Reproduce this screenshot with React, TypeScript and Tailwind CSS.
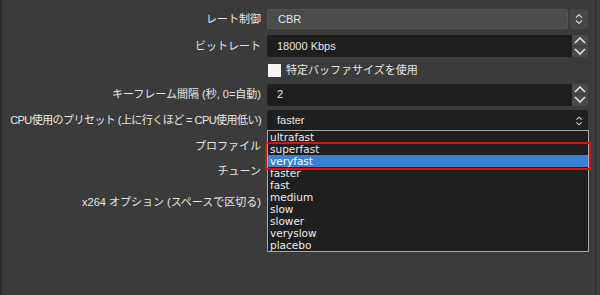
import React from "react";

const font = { fontFamily: '"Liberation Sans", "Noto Sans CJK JP", sans-serif' };
const listFont = { fontFamily: '"DejaVu Sans", "Liberation Sans", sans-serif' };

const presets = [
  "ultrafast",
  "superfast",
  "veryfast",
  "faster",
  "fast",
  "medium",
  "slow",
  "slower",
  "veryslow",
  "placebo",
];

function UpDown({ small }: { small?: boolean }) {
  // double chevron used by the combo boxes
  return (
    <svg width="10" height={small ? 12 : 14} viewBox="0 0 10 14" fill="none" stroke="#d0d0d0" strokeWidth="1.2">
      <path d="M2 5.5 L5 2.5 L8 5.5" />
      <path d="M2 8.5 L5 11.5 L8 8.5" />
    </svg>
  );
}

function Chevron({ up }: { up?: boolean }) {
  return (
    <svg width="14" height="8" viewBox="0 0 14 8" fill="none" stroke="#e0e0e0" strokeWidth="1.6">
      {up ? <path d="M2 7 L7 2 L12 7" /> : <path d="M2 1 L7 6 L12 1" />}
    </svg>
  );
}

function Label({ children, tight }: { children: React.ReactNode; tight?: boolean }) {
  return (
    <div
      className={
        tight
          ? "w-[265px] shrink-0 pr-[6px] text-right text-[11px] tracking-[-0.55px] text-[#e6e6e6] whitespace-nowrap"
          : "w-[265px] shrink-0 pr-[6px] text-right text-[11px] text-[#e6e6e6] whitespace-nowrap"
      }
    >
      {children}
    </div>
  );
}

function SpinBox({ value }: { value: string }) {
  return (
    <div className="flex h-[22px] w-[321px] items-stretch">
      <div className="flex flex-1 items-center rounded-l-[3px] bg-[#1e1e1e] pl-[10px] text-[11px] text-[#e6e6e6]">
        {value}
      </div>
      <div className="flex w-[16px] flex-col">
        <div className="flex flex-1 items-center justify-center rounded-tr-[3px] bg-[#4a4a4a]">
          <Chevron up />
        </div>
        <div className="flex flex-1 items-center justify-center rounded-br-[3px] bg-[#4a4a4a] border-t border-[#3a3a3a]">
          <Chevron />
        </div>
      </div>
    </div>
  );
}

export default function App() {
  return (
    <div
      className="relative h-[295px] w-[600px] overflow-hidden bg-[#3b3b3b] border-l-[2px] border-l-[#2d2d2d]"
      style={font}
    >
      <div className="absolute right-[4px] top-0 h-full w-[1px] bg-[#2e2e2e]" />
      <div className="flex flex-col pt-[9px]">
        {/* レート制御 */}
        <div className="flex h-[20px] items-center">
          <Label>レート制御</Label>
          <div className="flex h-[20px] w-[321px] items-center">
            <div className="flex h-full flex-1 items-center rounded-[2px] border border-[#555] bg-[#4b4b4b] pl-[10px] text-[11px] text-[#e6e6e6]">
              CBR
            </div>
            <div className="ml-[2px] flex h-full w-[18px] items-center justify-center rounded-[3px] bg-[#474747]">
              <UpDown />
            </div>
          </div>
        </div>

        {/* ビットレート */}
        <div className="mt-[6px] flex h-[22px] items-center">
          <Label>ビットレート</Label>
          <SpinBox value="18000 Kbps" />
        </div>

        {/* checkbox */}
        <div className="mt-[5px] flex h-[17px] items-center">
          <div className="w-[265px] shrink-0" />
          <div className="ml-[1px] flex items-center gap-[5px] text-[11px] text-[#e6e6e6]">
            <span className="block h-[13px] w-[13px] bg-[#f4f4f4]" />
            特定バッファサイズを使用
          </div>
        </div>

        {/* キーフレーム */}
        <div className="mt-[4px] flex h-[23px] items-center">
          <Label>キーフレーム間隔 (秒, 0=自動)</Label>
          <SpinBox value="2" />
        </div>

        {/* CPU preset */}
        <div className="mt-[4px] flex h-[21px] items-center">
          <Label tight>CPU使用のプリセット (上に行くほど = CPU使用低い)</Label>
          <div className="flex h-[21px] w-[321px] items-center justify-between rounded-[3px] bg-[#1f1f1f] pl-[10px] pr-[4px] text-[11px] text-[#e6e6e6]">
            faster
            <UpDown small />
          </div>
        </div>

        <div className="mt-[5px] flex h-[20px] items-center">
          <Label>プロファイル</Label>
        </div>
        <div className="mt-[5px] flex h-[20px] items-center">
          <Label>チューン</Label>
        </div>
        <div className="mt-[11px] flex h-[20px] items-center">
          <Label>x264 オプション (スペースで区切る)</Label>
        </div>
      </div>

      {/* open dropdown list */}
      <div
        className="absolute left-[265px] top-[130px] w-[322px] border border-[#a8a8a8] bg-[#1f1f1f] text-[10.5px] leading-[12px] text-[#ececec]"
        style={listFont}
      >
        {presets.map((p) => (
          <div
            key={p}
            className={
              p === "veryfast"
                ? "h-[12px] bg-[#3582d6] pl-[2px] text-white"
                : "h-[12px] pl-[2px]"
            }
          >
            {p}
          </div>
        ))}
      </div>

      {/* red highlight box */}
      <div className="absolute left-[263px] top-[142px] h-[28px] w-[326px] border-[2px] border-[#e01010]" />
    </div>
  );
}
